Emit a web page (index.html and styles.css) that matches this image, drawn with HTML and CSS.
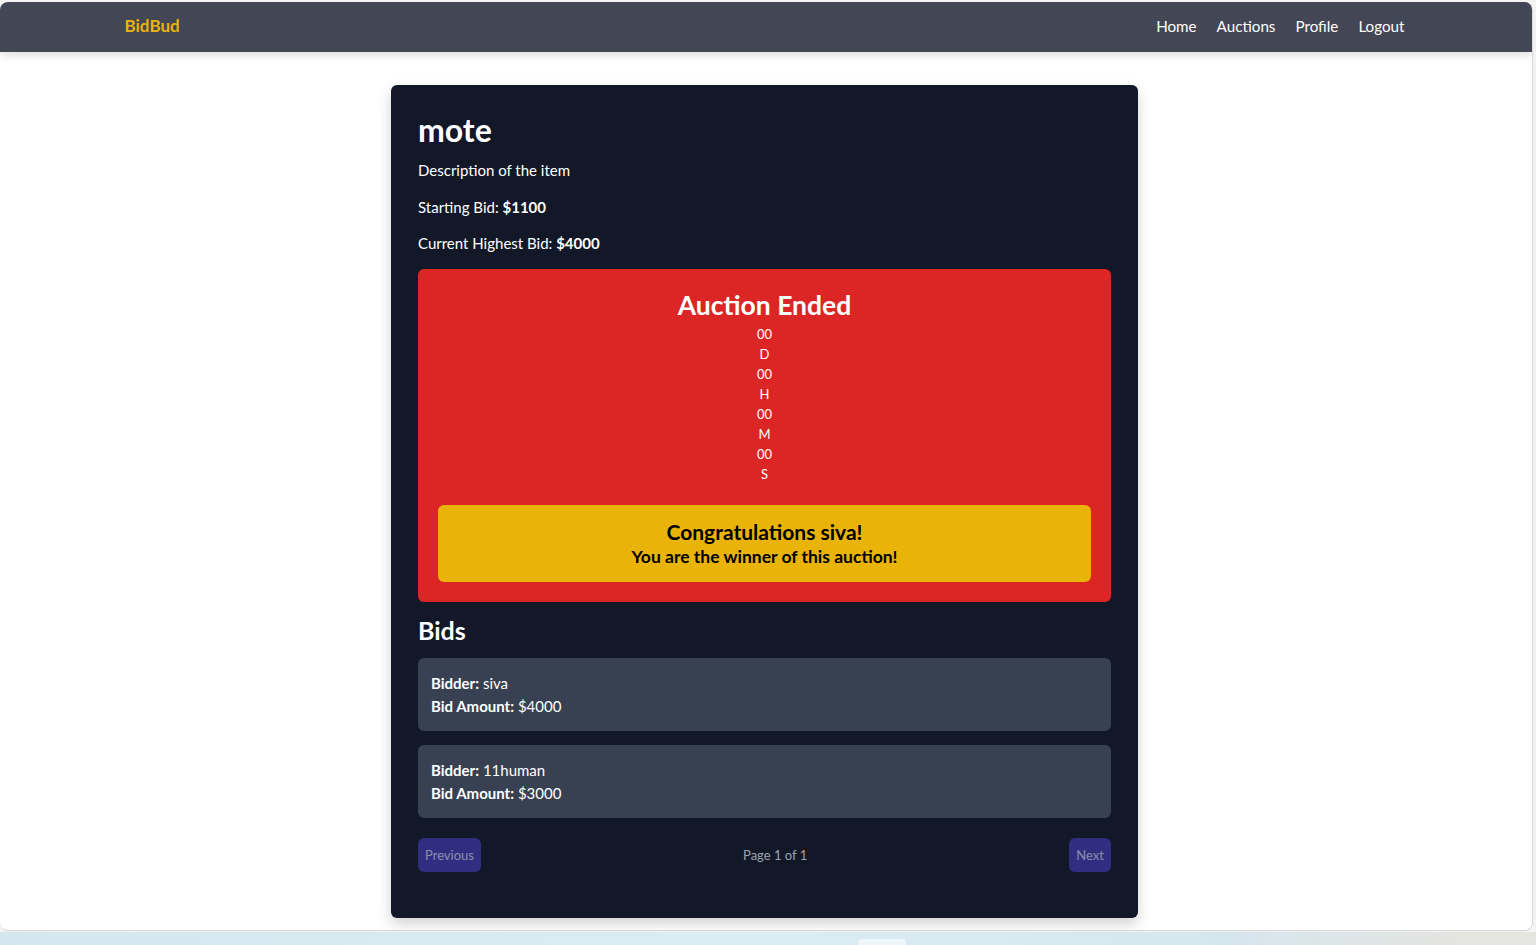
FILE: index.html
```html
<!DOCTYPE html>
<html lang="en">
<head>
<meta charset="utf-8">
<title>BidBud</title>
<link rel="stylesheet" href="styles.css">
</head>
<body>
<div class="screen">
  <div class="window">
    <nav class="navbar">
      <div class="nav-inner">
        <a class="brand" href="#">BidBud</a>
        <ul class="nav-links">
          <li><a href="#">Home</a></li>
          <li><a href="#">Auctions</a></li>
          <li><a href="#">Profile</a></li>
          <li><a href="#">Logout</a></li>
        </ul>
      </div>
    </nav>
    <main class="main">
      <section class="card">
        <h1 class="title">mote</h1>
        <p class="line">Description of the item</p>
        <p class="line">Starting Bid: <strong>$1100</strong></p>
        <p class="line last">Current Highest Bid: <strong>$4000</strong></p>
        <div class="ended">
          <h2 class="ended-title">Auction Ended</h2>
          <div class="countdown">
            <span>00</span><span>D</span>
            <span>00</span><span>H</span>
            <span>00</span><span>M</span>
            <span>00</span><span>S</span>
          </div>
          <div class="winner">
            <div class="winner-title">Congratulations siva!</div>
            <div class="winner-sub">You are the winner of this auction!</div>
          </div>
        </div>
        <h2 class="bids-title">Bids</h2>
        <div class="bid">
          <div><strong>Bidder:</strong> siva</div>
          <div><strong>Bid Amount:</strong> $4000</div>
        </div>
        <div class="bid">
          <div><strong>Bidder:</strong> 11human</div>
          <div><strong>Bid Amount:</strong> $3000</div>
        </div>
        <div class="pager">
          <button class="pg-btn">Previous</button>
          <span class="pg-text">Page 1 of 1</span>
          <button class="pg-btn">Next</button>
        </div>
      </section>
    </main>
  </div>
</div>
<div class="desktop"><span class="task"></span></div>
</body>
</html>
```
FILE: styles.css
```css
* { box-sizing: border-box; }
html, body { margin: 0; padding: 0; }
body {
  font-family: Lato, "Open Sans", sans-serif;
  background: #ffffff;
  width: 1536px;
  height: 945px;
  overflow: hidden;
}
.screen {
  height: 932px;
  padding-top: 2px;
  background: #f3f3f3;
}
.window {
  width: 1533px;
  height: 929px;
  background: #ffffff;
  border-radius: 8px;
  border-right: 1px solid #d9d9d9;
  border-bottom: 1px solid #d4d4d4;
  overflow: hidden;
}
.navbar {
  height: 50px;
  background: #434654;
  box-shadow: 0 4px 8px rgba(0,0,0,0.12);
  position: relative;
  padding-right: 3px;
}
.nav-inner {
  width: 1280px;
  margin: 0 auto;
  height: 100%;
  padding-bottom: 3px;
  display: flex;
  align-items: center;
  justify-content: space-between;
}
.brand {
  color: #eab308;
  font-weight: 700;
  font-size: 17px;
  text-decoration: none;
}
.nav-links {
  list-style: none;
  margin: 0;
  padding: 0;
  display: flex;
  gap: 20px;
}
.nav-links a {
  color: #ffffff;
  text-decoration: none;
  font-size: 15.2px;
}
.main {
  padding-top: 33px;
  padding-right: 3px;
  display: flex;
  justify-content: center;
}
.card {
  width: 747px;
  height: 833px;
  background: #121827;
  border-radius: 6px;
  padding: 25px 27px;
  color: #ffffff;
  box-shadow: 0 6px 14px rgba(0,0,0,0.18);
}
.title {
  margin: 0 0 8px;
  font-size: 32px;
  font-weight: 700;
  line-height: 40px;
}
.line {
  margin: 0 0 12.5px;
  font-size: 15px;
  line-height: 24px;
}
.line.last { margin-bottom: 14px; }
.line strong { font-weight: 700; }
.ended {
  background: #dc2626;
  border-radius: 6px;
  padding: 17px 20px 20px;
  text-align: center;
}
.ended-title {
  margin: 0;
  font-size: 26.5px;
  font-weight: 700;
  line-height: 38px;
}
.countdown {
  display: flex;
  flex-direction: column;
  align-items: center;
  font-size: 13px;
  line-height: 20px;
  margin-bottom: 21px;
}
.winner {
  background: #eab308;
  border-radius: 6px;
  color: #000000;
  padding: 13px 16px 13px;
  font-weight: 700;
}
.winner-title { font-size: 21px; line-height: 27px; }
.winner-sub { font-size: 17.5px; line-height: 24px; }
.bids-title {
  margin: 12px 0 12px;
  font-size: 25px;
  font-weight: 700;
  line-height: 32px;
}
.bid {
  background: #374151;
  border-radius: 6px;
  padding: 14px 13px;
  margin-bottom: 14px;
  font-size: 15px;
  line-height: 23px;
  height: 73px;
}
.pager {
  margin-top: 20px;
  display: flex;
  align-items: center;
  justify-content: space-between;
}
.pg-btn {
  background: #312e81;
  color: #8c8fa8;
  border: none;
  border-radius: 6px;
  font-family: inherit;
  font-size: 13px;
  height: 34px;
  padding: 0 7px;
}
.pg-text {
  color: #9ca3af;
  font-size: 13px;
}
.desktop {
  height: 13px;
  background: linear-gradient(90deg, #d4e7f0 0%, #dbedf4 50%, #d6e6ee 80%, #e4e4e0 95%);
  position: relative;
}
.task {
  position: absolute;
  left: 858px;
  top: 7px;
  width: 48px;
  height: 10px;
  border-radius: 4px;
  background: #eef6f9;
}
```
